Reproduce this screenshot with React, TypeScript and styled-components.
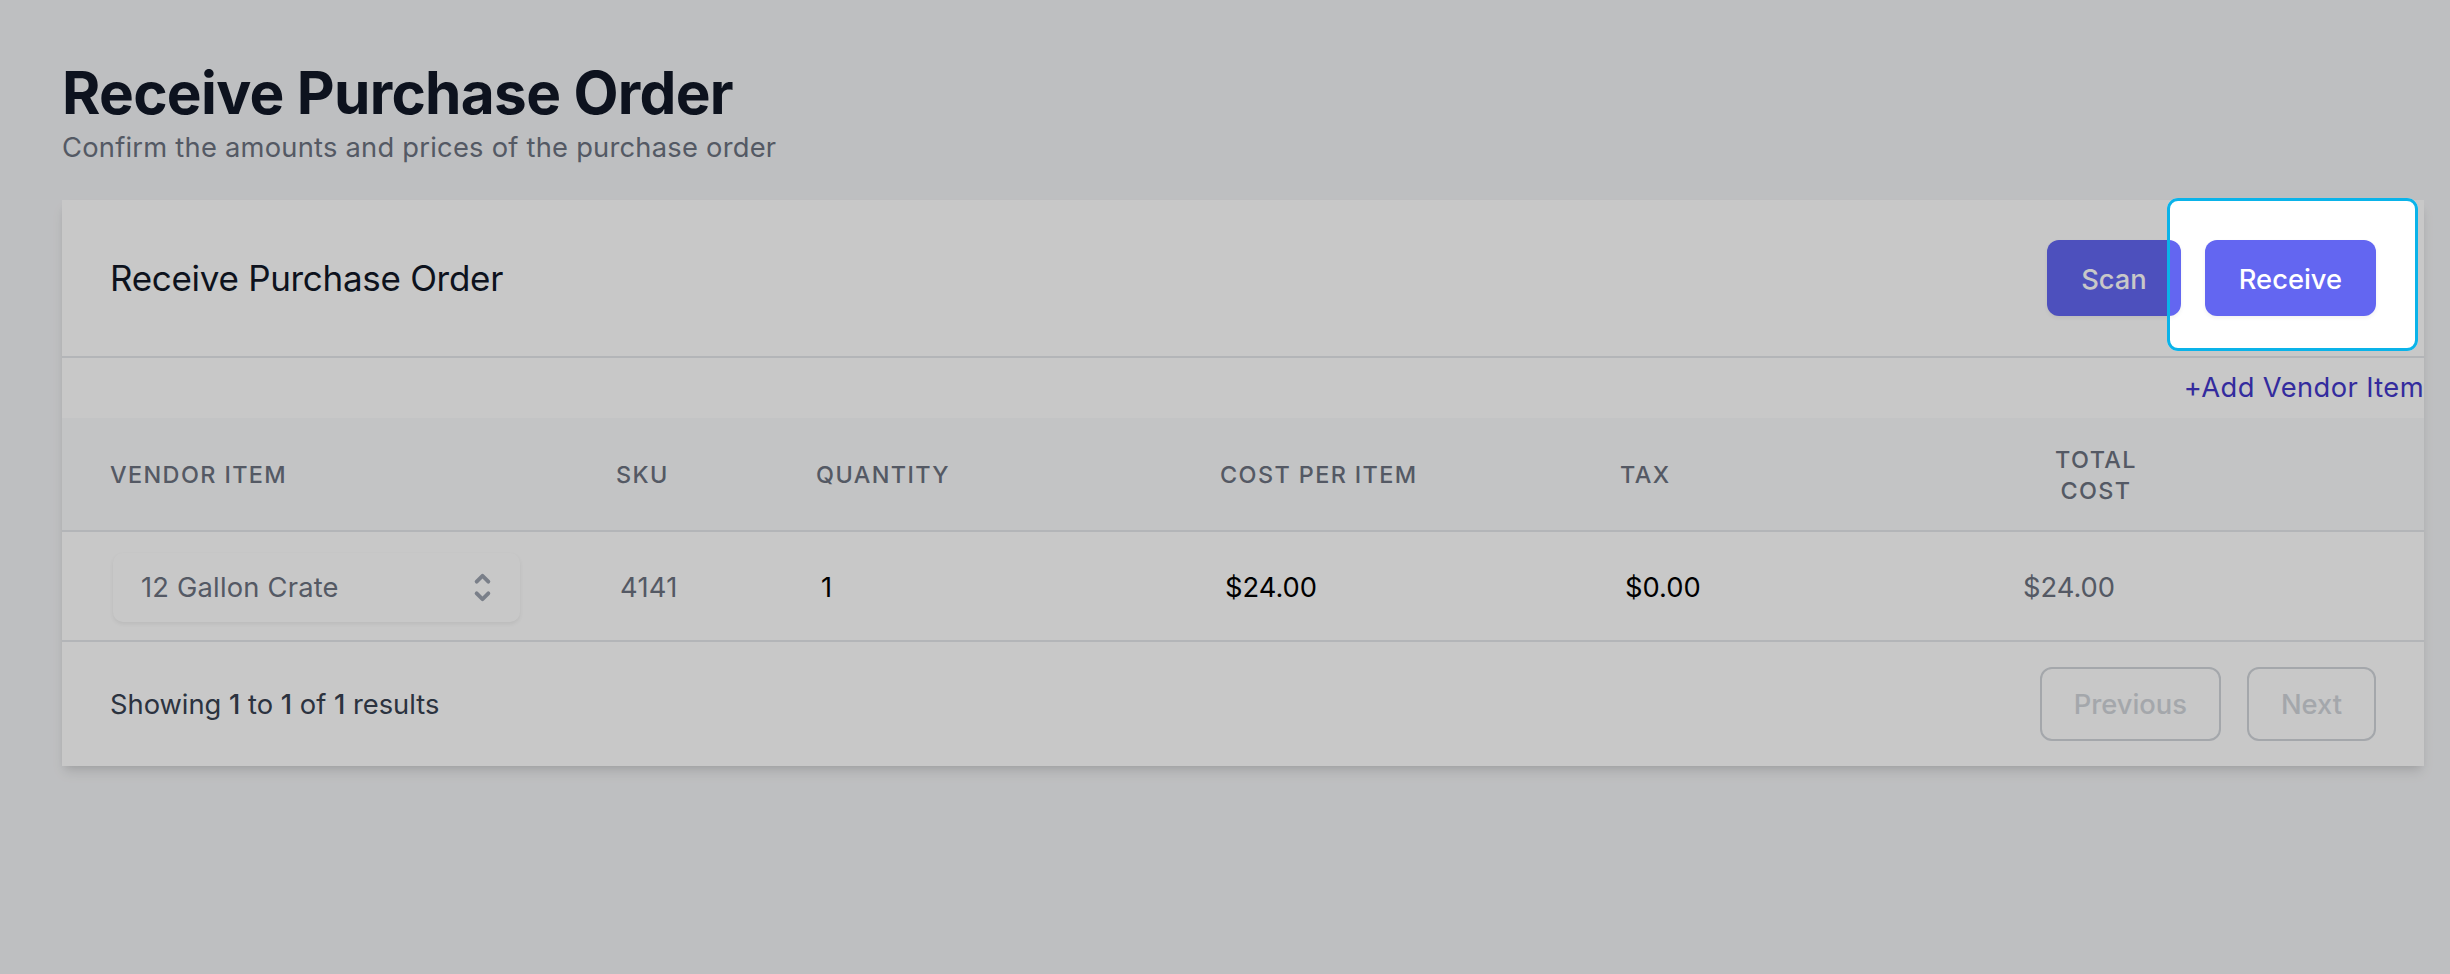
import React from "react";
import styled, { createGlobalStyle } from "styled-components";

const GlobalStyle = createGlobalStyle`
  * { box-sizing: border-box; }
  html, body { margin: 0; padding: 0; }
  body {
    background: #f3f4f6;
    font-family: Inter, "Noto Sans", "Liberation Sans", sans-serif;
    -webkit-font-smoothing: antialiased;
  }
`;

const Page = styled.main`
  min-height: 100vh;
  padding: 58px 26px 60px 62px;
`;

const Title = styled.h1`
  margin: 0;
  font-size: 58.5px;
  line-height: 70px;
  font-weight: 700;
  color: #111827;
  letter-spacing: -0.012em;
`;

const Subtitle = styled.p`
  margin: 0;
  font-size: 27.3px;
  line-height: 39px;
  color: #6b7280;
  letter-spacing: 0.24px;
`;

const Card = styled.section`
  margin-top: 33px;
  background: #ffffff;
  box-shadow: 0 8px 12px -2px rgba(0, 0, 0, 0.1), 0 4px 8px -4px rgba(0, 0, 0, 0.1);
`;

const CardHeader = styled.header`
  display: flex;
  align-items: center;
  justify-content: space-between;
  height: 158px;
  padding: 0 48px;
  border-bottom: 2px solid #e5e7eb;
`;

const CardTitle = styled.h2`
  margin: 0;
  font-size: 35px;
  line-height: 47px;
  font-weight: 400;
  letter-spacing: -0.3px;
  color: #111827;
`;

const Actions = styled.div`
  display: flex;
  align-items: center;
  gap: 24px;
`;

const PrimaryButton = styled.button`
  height: 76px;
  padding: 2px 34px 0;
  border: none;
  border-radius: 12px;
  background: #6366f1;
  color: #ffffff;
  font-family: inherit;
  font-size: 27.3px;
  font-weight: 500;
  box-shadow: 0 2px 4px rgba(0, 0, 0, 0.06);
  cursor: pointer;
`;

const SpotlightAnchor = styled.span`
  position: relative;
  display: inline-flex;
`;

const Spotlight = styled.span`
  position: absolute;
  top: -42px;
  bottom: -35px;
  left: -38px;
  right: -42px;
  border: 3px solid #0ab3e9;
  border-radius: 11px;
  box-shadow: 0 0 0 5000px rgba(0, 0, 0, 0.215);
  pointer-events: none;
  z-index: 10;
`;

const AddRow = styled.div`
  display: flex;
  align-items: center;
  justify-content: flex-end;
  height: 60px;
  padding-bottom: 2px;
`;

const AddLink = styled.a`
  font-size: 27.3px;
  line-height: 39px;
  letter-spacing: 0.4px;
  color: #4338ca;
  text-decoration: none;
  cursor: pointer;
`;

const Table = styled.table`
  width: 100%;
  table-layout: fixed;
  border-collapse: separate;
  border-spacing: 0;
`;

const HeadCell = styled.th<{ $center?: boolean }>`
  height: 114px;
  padding: 2px 48px 0;
  background: #f9fafb;
  border-bottom: 2px solid #e5e7eb;
  text-align: ${(p) => (p.$center ? "center" : "left")};
  vertical-align: middle;
  font-size: 23.4px;
  line-height: 31.2px;
  font-weight: 500;
  letter-spacing: 0.06em;
  text-transform: uppercase;
  color: #6b7280;
`;

const Cell = styled.td<{ $lead?: boolean }>`
  height: 110px;
  padding: 2px 48px 0 ${(p) => (p.$lead ? "51px" : "48px")};
  border-bottom: 2px solid #e5e7eb;
  vertical-align: middle;
  font-size: 27.3px;
  line-height: 39px;
  color: #6b7280;
`;

const SelectBox = styled.div`
  display: flex;
  align-items: center;
  justify-content: space-between;
  height: 69px;
  padding: 0 18px 0 28px;
  border-radius: 10px;
  background: #ffffff;
  box-shadow: 0 2px 4px rgba(0, 0, 0, 0.07);
  color: #6b7280;
  font-size: 27.3px;
  letter-spacing: 0.2px;
`;

const Sku = styled.span`
  padding-left: 4px;
  letter-spacing: 0.3px;
`;

const ValueInput = styled.input`
  width: 100%;
  padding: 0 0 0 5px;
  border: none;
  outline: none;
  background: transparent;
  font-family: inherit;
  font-size: 27.3px;
  line-height: 39px;
  color: #000000;
`;

const Footer = styled.footer`
  display: flex;
  align-items: center;
  justify-content: space-between;
  height: 124px;
  padding: 0 48px;
`;

const Summary = styled.p`
  margin: 0;
  font-size: 27.3px;
  line-height: 39px;
  color: #374151;

  strong {
    font-weight: 500;
  }
`;

const Pager = styled.div`
  display: flex;
  gap: 26px;
`;

const PageButton = styled.button`
  height: 74px;
  padding: 0 32px;
  border: 2px solid #d1d5db;
  border-radius: 12px;
  background: #ffffff;
  color: #d1d5db;
  font-family: inherit;
  font-size: 27.3px;
  font-weight: 500;
`;

const SelectorIcon = () => (
  <svg width="39" height="39" viewBox="0 0 20 20" fill="#9ca3af" aria-hidden="true">
    <path
      fillRule="evenodd"
      clipRule="evenodd"
      d="M10 3a1 1 0 01.707.293l3 3a1 1 0 01-1.414 1.414L10 5.414 7.707 7.707a1 1 0 01-1.414-1.414l3-3A1 1 0 0110 3zm-3.707 9.293a1 1 0 011.414 0L10 14.586l2.293-2.293a1 1 0 011.414 1.414l-3 3a1 1 0 01-1.414 0l-3-3a1 1 0 010-1.414z"
    />
  </svg>
);

const columns = [506, 200, 404, 400, 403, 242, 207];

export default function App() {
  return (
    <>
      <GlobalStyle />
      <Page>
        <Title>Receive Purchase Order</Title>
        <Subtitle>Confirm the amounts and prices of the purchase order</Subtitle>
        <Card>
          <CardHeader>
            <CardTitle>Receive Purchase Order</CardTitle>
            <Actions>
              <PrimaryButton>Scan</PrimaryButton>
              <SpotlightAnchor>
                <PrimaryButton>Receive</PrimaryButton>
                <Spotlight />
              </SpotlightAnchor>
            </Actions>
          </CardHeader>
          <AddRow>
            <AddLink>+Add Vendor Item</AddLink>
          </AddRow>
          <Table>
            <colgroup>
              {columns.map((w, i) => (
                <col key={i} style={{ width: w }} />
              ))}
            </colgroup>
            <thead>
              <tr>
                <HeadCell>Vendor Item</HeadCell>
                <HeadCell>SKU</HeadCell>
                <HeadCell>Quantity</HeadCell>
                <HeadCell>Cost per item</HeadCell>
                <HeadCell>Tax</HeadCell>
                <HeadCell $center>Total cost</HeadCell>
                <HeadCell />
              </tr>
            </thead>
            <tbody>
              <tr>
                <Cell $lead>
                  <SelectBox>
                    <span>12 Gallon Crate</span>
                    <SelectorIcon />
                  </SelectBox>
                </Cell>
                <Cell>
                  <Sku>4141</Sku>
                </Cell>
                <Cell>
                  <ValueInput defaultValue="1" />
                </Cell>
                <Cell>
                  <ValueInput defaultValue="$24.00" />
                </Cell>
                <Cell>
                  <ValueInput defaultValue="$0.00" />
                </Cell>
                <Cell>$24.00</Cell>
                <Cell />
              </tr>
            </tbody>
          </Table>
          <Footer>
            <Summary>
              Showing <strong>1</strong> to <strong>1</strong> of <strong>1</strong> results
            </Summary>
            <Pager>
              <PageButton disabled>Previous</PageButton>
              <PageButton disabled>Next</PageButton>
            </Pager>
          </Footer>
        </Card>
      </Page>
    </>
  );
}
